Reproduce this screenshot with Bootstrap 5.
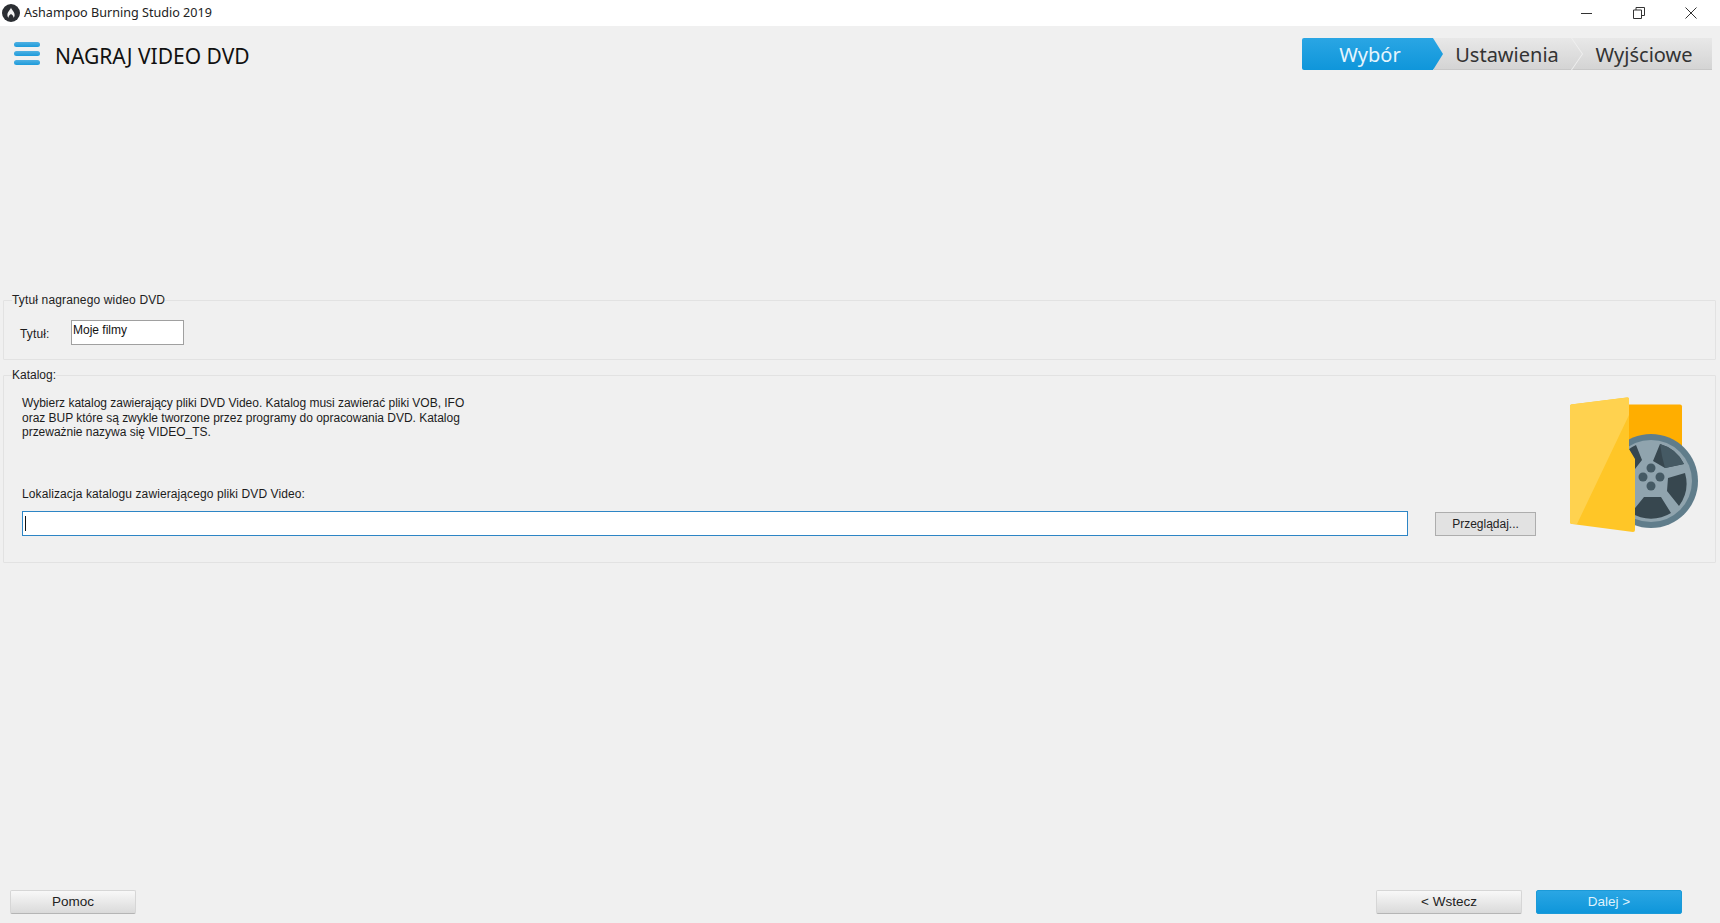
<!DOCTYPE html>
<html lang="pl">
<head>
<meta charset="utf-8">
<title>Ashampoo Burning Studio 2019</title>
<link href="https://cdn.jsdelivr.net/npm/bootstrap@5.3.0/dist/css/bootstrap.min.css" rel="stylesheet">
<style>
html,body{height:100%;overflow:hidden}
body{background:#f0f0f0;color:#1c1c1c;font-family:"Liberation Sans",Arial,sans-serif;font-size:12px}
.app-shell{width:1720px;height:923px}
.title-bar{height:26px;background:#fff;padding-left:2px;font-family:"Noto Sans",sans-serif;font-size:12.6px;color:#222}
.title-bar .app-name{margin-left:4px}
.win-btn{width:52px;height:26px;display:flex;align-items:center;justify-content:center}
.win-btns{margin-right:3px}
.head-row{height:50px;padding:12px 8px 0 14px}
.burger{width:26px;height:23px;display:flex;flex-direction:column;justify-content:space-between;margin-top:4px}
.burger span{height:5px;border-radius:3px;background:linear-gradient(#4fb0e2,#1c9bdb)}
.page-title{font-family:"Noto Sans",sans-serif;font-size:21px;font-weight:400;color:#111;margin:3px 0 0 15px;line-height:30px}
.stepper{font-family:"Noto Sans",sans-serif;font-size:20px;line-height:33px;height:32px;color:#333}
.step{background:linear-gradient(#e8e8e8,#d4d4d4);text-align:center;border-bottom:1px solid #c8c8c8}
.step-a{width:141px;background:linear-gradient(#2aa6e4,#0f96da);color:#e6f5fd;border-radius:2px 0 0 2px;border:0;padding-right:5px;clip-path:polygon(0 0,131px 0,100% 50%,131px 100%,0 100%);position:relative;z-index:1}
.step-b{width:148px;margin-left:-9px;padding-right:2px;clip-path:polygon(0 0,137px 0,100% 50%,137px 100%,0 100%)}
.step-c{width:140px;margin-left:-10px;padding-left:4px;clip-path:polygon(0 0,100% 0,100% 100%,0 100%,11px 50%)}
.group-box{border:1px solid #e2e2e2;border-radius:1px;margin:0 4px 0 3px;min-width:0;padding:0}
.group-box legend{float:none;width:auto;font-size:12px;line-height:14px;margin:0 0 0 8px;padding:0;color:#222}
.box-title legend{letter-spacing:.15px}
.box-title{margin-top:217px;height:67px}
.title-row{padding:13px 0 0 16px}
.title-label{margin-top:7px;width:51px;line-height:14px;letter-spacing:.15px}
.title-input{width:113px;height:25px;background:#fff;border:1px solid #a0a0a0;padding:2px 1px;line-height:14px;font-size:12px;color:#111}
.box-catalog{margin-top:8px;height:195px}
.catalog-pad{padding:14px 0 0 18px}
.intro{width:470px;line-height:14.5px;margin:0;letter-spacing:-.02px}
.loc-label{margin:47px 0 0;line-height:14px;letter-spacing:.1px}
.path-row{margin-top:10px}
.path-input{width:1386px;height:25px;background:#fff;border:1px solid #2d85c5;display:flex;align-items:center;padding-left:2px}
.caret-bar{width:1px;height:15px;background:#111}
.browse{width:101px;height:24px;margin:1px 0 0 27px;background:#e2e2e2;border:1px solid #adadad;border-radius:0;color:#222;font-size:12px;padding:0;line-height:22px}
.art{width:132px;height:138px;margin:-114px 0 0 33px;display:block}
.foot-row{padding:0 38px 9px 10px}
.act{height:24px;width:146px;border-radius:2px;font-size:13.5px;padding:0;line-height:22px;color:#222;background:linear-gradient(#f8f8f8,#dadada);border:1px solid #d6d6d6;border-bottom-color:#b5b5b5}
.act-help{width:126px}
.act-next{background:linear-gradient(#2aa6e4,#0f96da);border-color:#1b9ad8;color:#dff2fc;margin-left:14px}
</style>
</head>
<body>
<div class="app-shell d-flex flex-column">
  <div class="title-bar d-flex align-items-center">
    <svg width="18" height="18" viewBox="0 0 18 18"><circle cx="9" cy="9" r="9" fill="#2b2e33"/><path d="M9 3.500c.6 2.400 3.600 4.300 3.600 7.500 0 1.300-.5 2.200-1.200 2.800.2-1.800-1-3-2.400-3.800-1.300.8-2.600 2-2.400 3.800-.7-.6-1.200-1.500-1.200-2.800C5.400 7.800 8.400 5.900 9 3.500z" fill="#f4f4f4"/></svg>
    <span class="app-name">Ashampoo Burning Studio 2019</span>
    <div class="win-btns d-flex ms-auto">
      <div class="win-btn"><svg width="12" height="12" viewBox="0 0 12 12"><path d="M0 6.500h11" stroke="#333" fill="none"/></svg></div>
      <div class="win-btn"><svg width="12" height="12" viewBox="0 0 12 12"><path d="M.5 3h8v8.500h-8zM3 3V.5h8.500V8.500H8.500" stroke="#333" fill="none"/></svg></div>
      <div class="win-btn"><svg width="12" height="12" viewBox="0 0 12 12"><path d="M.5.500l11 11M11.500.5l-11 11" stroke="#333" fill="none"/></svg></div>
    </div>
  </div>

  <div class="head-row d-flex align-items-start">
    <div class="burger"><span></span><span></span><span></span></div>
    <h1 class="page-title">NAGRAJ VIDEO DVD</h1>
    <div class="stepper d-flex ms-auto">
      <div class="step step-a">Wybór</div>
      <div class="step step-b">Ustawienia</div>
      <div class="step step-c">Wyjściowe</div>
    </div>
  </div>

  <fieldset class="group-box box-title">
    <legend>Tytuł nagranego wideo DVD</legend>
    <div class="title-row d-flex">
      <div class="title-label">Tytuł:</div>
      <div class="title-input">Moje filmy</div>
    </div>
  </fieldset>

  <fieldset class="group-box box-catalog">
    <legend>Katalog:</legend>
    <div class="catalog-pad">
      <p class="intro">Wybierz katalog zawierający pliki DVD Video. Katalog musi zawierać pliki VOB, IFO<br>oraz BUP które są zwykle tworzone przez programy do opracowania DVD. Katalog<br>przeważnie nazywa się VIDEO_TS.</p>
      <p class="loc-label">Lokalizacja katalogu zawierającego pliki DVD Video:</p>
      <div class="path-row d-flex align-items-start">
        <div class="path-input"><span class="caret-bar"></span></div>
        <button type="button" class="btn browse">Przeglądaj...</button>
        <svg class="art" viewBox="0 0 132 138" aria-hidden="true">
          <path d="M58 7.500h53a2 2 0 0 1 2 2v108H58z" fill="#ffae00"/>
          <g transform="translate(-1 -2)">
            <circle cx="83" cy="86" r="47" fill="#607d8b"/>
            <circle cx="83" cy="86" r="41" fill="#90a4ae"/>
            <path d="M68 50a38 38 0 0 0-15 12l14 12 7-9zM92 49l-7 17 12 7 19-4a38 38 0 0 0-24-20zM117 78l-17 5-1 13 12 15a38 38 0 0 0 6-33zM63 118a38 38 0 0 0 40 0l-10-16-17 0zM48 72a38 38 0 0 0 1 31l17-7-1-15z" fill="#37474f"/>
            <path d="M92 49a38 38 0 0 1 24 20l-19 4-3-12z" fill="#455a64"/>
            <g fill="#455a64"><circle cx="83" cy="73" r="4.500"/><circle cx="92" cy="82" r="4.500"/><circle cx="83" cy="91" r="4.500"/><circle cx="75" cy="82" r="4.500"/></g>
          </g>
          <path d="M2 7.500 58 .5a1.500 1.500 0 0 1 2 1.500V52l6 10v71a2 2 0 0 1-2 2L3 127a2 2 0 0 1-2-2V9.500a2 2 0 0 1 1-2z" fill="#ffc627"/>
          <path d="M2 7.500 58 .5a1.500 1.500 0 0 1 2 1.500V18L8 127l-5 0a2 2 0 0 1-2-2V9.500a2 2 0 0 1 1-2z" fill="#ffd24f"/>
        </svg>
      </div>
    </div>
  </fieldset>

  <div class="foot-row d-flex align-items-end mt-auto">
    <button type="button" class="btn act act-help">Pomoc</button>
    <button type="button" class="btn act ms-auto">&lt; Wstecz</button>
    <button type="button" class="btn act act-next">Dalej &gt;</button>
  </div>
</div>
<script src="https://cdn.jsdelivr.net/npm/bootstrap@5.3.0/dist/js/bootstrap.bundle.min.js"></script>
</body>
</html>
